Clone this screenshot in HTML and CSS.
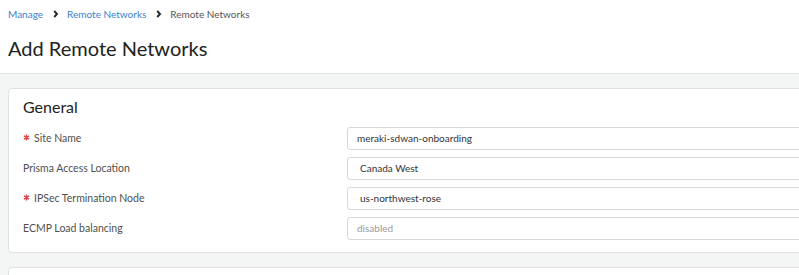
FILE: index.html
```html
<!DOCTYPE html>
<html lang="en">

<head>
    <meta charset="UTF-8">
    <meta name="viewport" content="width=device-width, initial-scale=1.0">
    <title>Add Remote Networks</title>
    <link rel="stylesheet" href="styles.css">
</head>

<body>
    <!-- 页头 -->
    <div class="header">
        <div class="crumbs">
            <a class="crumb link">Manage</a>
            <svg class="sep" width="6" height="8" viewBox="0 0 6 8"><path d="M1.2 1l2.8 3-2.8 3" fill="none" stroke="#2b2b2b" stroke-width="2"/></svg>
            <a class="crumb link">Remote Networks</a>
            <svg class="sep" width="6" height="8" viewBox="0 0 6 8"><path d="M1.2 1l2.8 3-2.8 3" fill="none" stroke="#2b2b2b" stroke-width="2"/></svg>
            <span class="crumb">Remote Networks</span>
        </div>
        <h1 class="title">Add Remote Networks</h1>
    </div>

    <!-- 内容 -->
    <div class="main">
        <div class="card">
            <h2 class="card-title">General</h2>
            <div class="row">
                <label class="label"><svg class="req" width="7" height="7" viewBox="0 0 8 8"><path d="M4 0.5v7M1 2.2l6 3.6M7 2.2l-6 3.6" stroke="#d9434a" stroke-width="1.6"/></svg>Site Name</label>
                <div class="field">meraki-sdwan-onboarding</div>
            </div>
            <div class="row">
                <label class="label">Prisma Access Location</label>
                <div class="field pad">Canada West</div>
            </div>
            <div class="row">
                <label class="label"><svg class="req" width="7" height="7" viewBox="0 0 8 8"><path d="M4 0.5v7M1 2.2l6 3.6M7 2.2l-6 3.6" stroke="#d9434a" stroke-width="1.6"/></svg>IPSec Termination Node</label>
                <div class="field pad">us-northwest-rose</div>
            </div>
            <div class="row">
                <label class="label">ECMP Load balancing</label>
                <div class="field muted">disabled</div>
            </div>
        </div>
        <div class="card next"></div>
    </div>
</body>

</html>
```

FILE: styles.css
```css
html,
body {
    margin: 0;
    overflow: hidden;
}

body {
    font-family: Lato, "Open Sans", sans-serif;
    color: #333;
    background: #f4f5f5;
    height: 275px;
}

.header {
    background: #fff;
    padding: 0 8px;
    height: 73px;
    border-bottom: 1px solid #e2e3e3;
}

.crumbs {
    height: 28px;
    display: flex;
    align-items: center;
    font-size: 10px;
    color: #555;
}

.crumb.link {
    color: #3d7fd1;
}

.sep {
    margin: 0 8px 0 10px;
}

.title {
    margin: 0;
    font-size: 20px;
    font-weight: 400;
    line-height: 40px;
    color: #222;
}

.main {
    padding: 14px 0 0 8px;
    height: 187px;
    overflow: hidden;
}

/* 卡片超出右边 */
.card {
    width: 830px;
    background: #fff;
    border: 1px solid #e0e1e1;
    border-radius: 4px;
    padding: 7px 14px 9px;
    box-sizing: border-box;
}

.card.next {
    margin-top: 14px;
    height: 40px;
}

.card-title {
    margin: 0 0 5px;
    font-size: 16px;
    font-weight: 400;
    line-height: 22px;
    color: #222;
}

.row {
    height: 30px;
    display: flex;
    align-items: center;
}

.label {
    width: 324px;
    flex: none;
    display: flex;
    align-items: center;
    padding-bottom: 1px;
    font-size: 10.5px;
    color: #4f4f4f;
}

.req {
    margin-right: 4px;
}

.field {
    flex: 1;
    height: 23px;
    box-sizing: border-box;
    border: 1px solid #d9d9d9;
    border-radius: 3px;
    padding: 0 9px;
    display: flex;
    align-items: center;
    font-size: 10px;
    color: #333;
}

.field.pad {
    padding-left: 12px;
}

.field.muted {
    color: #999;
}
```
